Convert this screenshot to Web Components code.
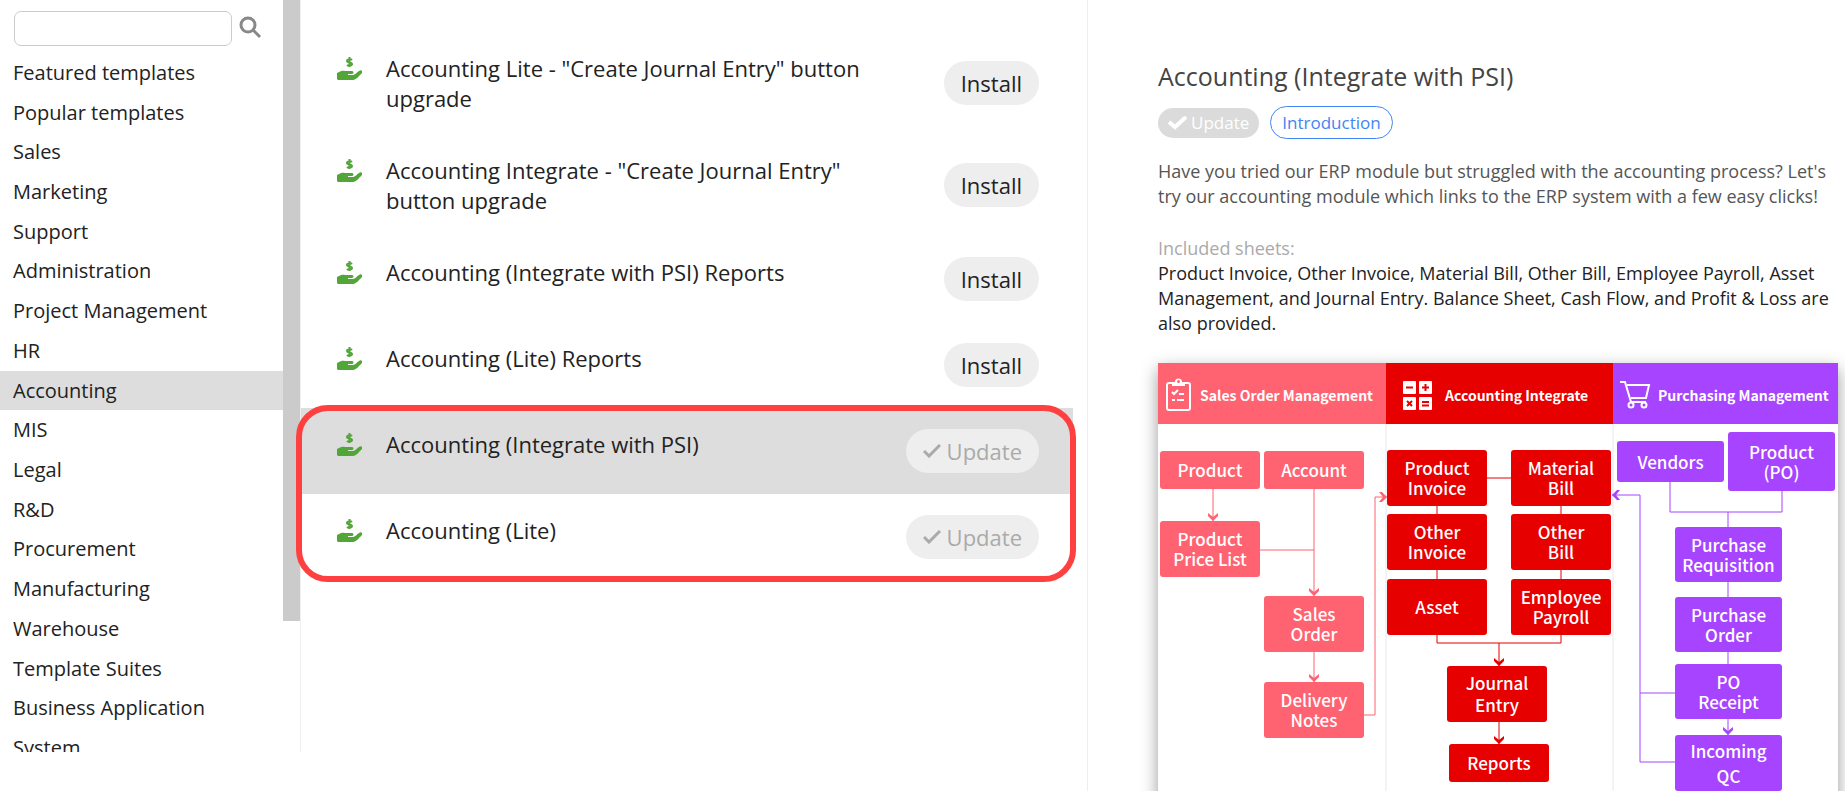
<!DOCTYPE html>
<html lang="en">
<head>
<meta charset="utf-8">
<title>Templates</title>
<style>
    body {
        margin: 0;
        background: #fff;
        color: #222;
        font-family: "Open Sans", "Noto Sans", sans-serif;
    }
</style>
</head>
<body>
<template-store></template-store>

<script>
class SearchField extends HTMLElement {

    constructor() {
        super();
        this.shadowDOM = this.attachShadow({mode: "open"});
    }

    connectedCallback() {
        this.render();
    }

    render() {
        this.shadowDOM.innerHTML = `
        <style>
        :host {
            display: flex;
            padding: 11px 20px 7px 14px;
            gap: 7px;
        }

        input {
            box-sizing: border-box;
            flex: 1;
            min-width: 0;
            height: 35px;
            padding: 0 8px;
            border: 1px solid #ccc;
            border-radius: 7px;
            font: inherit;
        }

        button {
            width: 24px;
            height: 34px;
            padding: 0;
            border: 0;
            background: none;
            cursor: pointer;
        }

        svg {
            display: block;
        }
        </style>
        <input type="search" aria-label="Search templates">
        <button type="button" aria-label="Search">
            <svg width="24" height="24" viewBox="0 0 24 24" fill="none" stroke="#888" stroke-width="3">
                <circle cx="9" cy="9" r="7"/>
                <path d="M14 14l7 7"/>
            </svg>
        </button>
        `;
    }
}

customElements.define("search-field", SearchField);

class CategoryMenu extends HTMLElement {

    constructor() {
        super();
        this.shadowDOM = this.attachShadow({mode: "open"});
        this.categories = ["Featured templates", "Popular templates", "Sales", "Marketing", "Support",
            "Administration", "Project Management", "HR", "Accounting", "MIS", "Legal", "R&amp;D", "Procurement",
            "Manufacturing", "Warehouse", "Template Suites", "Business Application", "System"];
    }

    connectedCallback() {
        this.render();
    }

    render() {
        const active = this.getAttribute("active");
        const links = this.categories.map(name =>
            `<a href="#"${name === active ? ' class="active"' : ""}>${name}</a>`).join("");

        this.shadowDOM.innerHTML = `
        <style>
        :host {
            display: grid;
            grid-template-columns: minmax(0, 1fr) 17px;
            height: calc(100vh - 50px);
            overflow: hidden;
        }

        nav {
            display: flex;
            flex-direction: column;
            height: 715px;
        }

        a {
            display: flex;
            flex: 1;
            align-items: center;
            padding: 0 0 1px 13px;
            color: #222;
            font-size: 20px;
            font-weight: 500;
            line-height: 27px;
            text-decoration: none;
        }

        .active {
            background: #ddd;
        }

        .scroll {
            display: grid;
            grid-template-rows: 621fr 131fr;
            height: calc(100vh - 50px);
        }

        .thumb {
            background: #cbcbcb;
        }
        </style>
        <div>
            <search-field></search-field>
            <nav>${links}</nav>
        </div>
        <div class="scroll"><div class="thumb"></div></div>
        `;
    }
}

customElements.define("category-menu", CategoryMenu);

class TemplateRow extends HTMLElement {

    constructor() {
        super();
        this.shadowDOM = this.attachShadow({mode: "open"});
    }

    connectedCallback() {
        this.render();
    }

    render() {
        const installed = this.hasAttribute("installed");
        const button = installed
            ? `<button type="button" disabled>
                   <svg width="18" height="14" viewBox="0 0 18 14" fill="none" stroke="#aaa" stroke-width="3"><path d="M1 7l5 5L17 1"/></svg>Update
               </button>`
            : `<button type="button">Install</button>`;

        this.shadowDOM.innerHTML = `
        <style>
        :host {
            display: grid;
            grid-template-columns: 25px 1fr 133px;
            gap: 24px;
            padding: 21px 34px 21px 36px;
            font-size: 22px;
            line-height: 30px;
        }

        :host([selected]) {
            background: #ddd;
        }

        .icon {
            display: block;
            margin-top: 4px;
        }

        button {
            display: flex;
            align-items: center;
            align-self: center;
            justify-self: end;
            gap: 6px;
            height: 44px;
            padding: 0 17px;
            border: 0;
            border-radius: 22px;
            background: #eee;
            color: #222;
            font: inherit;
            cursor: pointer;
        }

        button:disabled {
            color: #aaa;
            cursor: default;
        }
        </style>
        <svg class="icon" width="25" height="24" viewBox="0 0 25 24" fill="none" stroke="#52a637">
            <path stroke-width="2" d="M15 3C14 2 10 2 10 4s5 1 5 3-4 2-5 1M12.500 0v10"/>
            <path fill="#52a637" stroke="none" d="M0 16l2-1c3-2 6-1 8-1h5c2 0 2 3 0 3h-4v1h5c2 0 4-3 6-4 2-2 4 0 3 2-3 3-6 7-9 7H1l-1-1z"/>
        </svg>
        <div><slot></slot></div>
        ${button}
        `;
    }
}

customElements.define("template-row", TemplateRow);

class HighlightGroup extends HTMLElement {

    constructor() {
        super();
        this.shadowDOM = this.attachShadow({mode: "open"});
    }

    connectedCallback() {
        this.shadowDOM.innerHTML = `
        <style>
        :host {
            display: block;
            position: relative;
        }

        .frame {
            position: absolute;
            inset: -3px -3px -2px -5px;
            border: 6px solid #ff4040;
            border-radius: 32px;
            pointer-events: none;
        }
        </style>
        <slot></slot>
        <div class="frame"></div>
        `;
    }
}

customElements.define("highlight-group", HighlightGroup);

class FlowChart extends HTMLElement {

    constructor() {
        super();
        this.shadowDOM = this.attachShadow({mode: "open"});
        // [x, y, width, height, lines, line pitch]
        this.groups = [
            {color: "#ff6371", nodes: [
                [2, 88, 100, 38, ["Product"]],
                [106, 88, 100, 38, ["Account"]],
                [2, 158, 100, 56, ["Product", "Price List"]],
                [106, 233, 100, 56, ["Sales", "Order"]],
                [106, 319, 100, 56, ["Delivery", "Notes"]]
            ], lines: "M55 126V158M156 126V233M102 187H156M156 289V319M206 352H217V134H229",
            arrows: [[55, 158, 0], [156, 233, 0], [156, 319, 0], [229, 134, -90]]},
            {color: "#e60000", nodes: [
                [229, 87, 100, 56, ["Product", "Invoice"]],
                [353, 87, 100, 56, ["Material", "Bill"]],
                [229, 151, 100, 56, ["Other", "Invoice"]],
                [353, 151, 100, 56, ["Other", "Bill"]],
                [229, 216, 100, 56, ["Asset"]],
                [353, 216, 100, 56, ["Employee", "Payroll"]],
                [289, 303, 100, 56, ["Journal", "Entry"], 22],
                [291, 381, 100, 38, ["Reports"]]
            ], lines: "M329 115H353M279 142V151M279 207V216M403 142V151M403 207V216M279 272V280H403V272M341 280V303M341 359V381",
            arrows: [[341, 303, 0], [341, 381, 0]]},
            {color: "#a644ff", nodes: [
                [459, 78, 107, 41, ["Vendors"]],
                [570, 69, 107, 59, ["Product", "(PO)"]],
                [517, 164, 107, 55, ["Purchase", "Requisition"]],
                [517, 234, 107, 55, ["Purchase", "Order"]],
                [517, 301, 107, 55, ["PO", "Receipt"]],
                [517, 372, 107, 56, ["Incoming", "QC"], 25]
            ], lines: "M512 119V149H624V128M570 149V164M570 219V234M570 289V301M570 356V372M517 330H482M517 399H482V132H454",
            arrows: [[570, 372, 0], [454, 132, 90]]}
        ];
    }

    connectedCallback() {
        this.render();
    }

    drawNode([x, y, w, h, lines, pitch = 20], color) {
        const first = Math.round(y + h / 2 + 7 - (lines.length - 1) * pitch / 2);
        const text = lines.map((line, i) =>
            `<text x="${x + w / 2}" y="${first + i * pitch}">${line}</text>`).join("");
        return `<rect x="${x}" y="${y}" width="${w}" height="${h}" rx="3" fill="${color}"/>${text}`;
    }

    drawGroup(group) {
        const arrows = group.arrows.map(([x, y, turn]) =>
            `<path fill="${group.color}" transform="translate(${x} ${y}) rotate(${turn})" d="M0 0L-5 -5V-8L0 -4L5 -8V-5z"/>`).join("");
        return `<path d="${group.lines}" fill="none" stroke="${group.color}"/>${arrows}`
            + group.nodes.map(node => this.drawNode(node, group.color)).join("");
    }

    render() {
        this.shadowDOM.innerHTML = `
        <style>
        :host {
            display: block;
            box-shadow: 0 6px 16px rgba(0, 0, 0, .4);
        }

        svg {
            display: block;
            width: 100%;
            background: #fff;
        }

        text {
            fill: #fff;
            font-family: "Noto Sans CJK TC", "Noto Sans CJK SC", sans-serif;
            font-size: 17px;
            font-weight: 500;
            text-anchor: middle;
        }

        .head text {
            font-size: 14px;
            font-weight: 700;
            text-anchor: start;
        }
        </style>
        <svg viewBox="0 0 680 480">
            <path d="M228 61V480M455 61V480" stroke="#e8e8e8"/>
            <g class="head">
                <rect width="228" height="61" fill="#ff6371"/>
                <rect x="228" width="227" height="61" fill="#e60000"/>
                <rect x="455" width="225" height="61" fill="#a644ff"/>
                <text x="42" y="38">Sales Order Management</text>
                <text x="287" y="38">Accounting Integrate</text>
                <text x="500" y="38">Purchasing Management</text>
            </g>
            <g fill="none" stroke="#fff" stroke-width="2">
                <rect x="9" y="20" width="23" height="27" rx="2"/>
                <path fill="#fff" stroke="none" d="M14 19h3a3.500 3.500 0 0 1 7 0h3v4H14z"/>
                <circle cx="20.500" cy="18.500" r="1.500" fill="#ff6371" stroke="none"/>
                <path stroke-width="2" d="M14 29l2 2 4-4M21 31h5M14 37h3M19 37h7"/>
            </g>
            <g fill="#fff">
                <rect x="245" y="18" width="13" height="13" rx="1"/>
                <rect x="261" y="18" width="13" height="13" rx="1"/>
                <rect x="245" y="34" width="13" height="13" rx="1"/>
                <rect x="261" y="34" width="13" height="13" rx="1"/>
                <path stroke="#e60000" stroke-width="2" d="M248 24.500h7M264 24.500h7M267.500 21v7M249 38l5 5M254 38l-5 5M264 39h7M264 42.500h7"/>
            </g>
            <g fill="none" stroke="#fff" stroke-width="2">
                <path d="M462 19h5l6 20h15M469 22h22l-3 13h-15"/>
                <circle cx="473" cy="42" r="2.500"/>
                <circle cx="486" cy="42" r="2.500"/>
            </g>
            ${this.groups.map(group => this.drawGroup(group)).join("")}
        </svg>
        `;
    }
}

customElements.define("flow-chart", FlowChart);

class TemplateDetail extends HTMLElement {

    constructor() {
        super();
        this.shadowDOM = this.attachShadow({mode: "open"});
    }

    connectedCallback() {
        this.render();
    }

    render() {
        this.shadowDOM.innerHTML = `
        <style>
        :host {
            display: block;
            box-sizing: border-box;
            height: calc(100vh - 11px);
            padding: 59px 7px 0 70px;
            border-left: 1px solid #eee;
            overflow: hidden;
            font-size: 18px;
            line-height: 25px;
        }

        h1 {
            margin: 0 0 12px;
            color: #444;
            font-size: 25px;
            font-weight: 400;
            line-height: 35px;
        }

        .actions {
            display: flex;
            align-items: center;
            gap: 11px;
            margin-bottom: 20px;
        }

        button, .actions a {
            display: flex;
            align-items: center;
            box-sizing: border-box;
            font: inherit;
            font-size: 17px;
        }

        button {
            gap: 4px;
            height: 30px;
            padding: 0 10px;
            border: 0;
            border-radius: 15px;
            background: #dbdbdb;
            color: #fff;
            font-weight: 500;
        }

        .actions a {
            height: 33px;
            padding: 0 11px;
            border: 1px solid #4285f4;
            border-radius: 17px;
            color: #4285f4;
            text-decoration: none;
        }

        p {
            margin: 0 0 27px;
            color: #555;
        }

        h2 {
            margin: 0;
            color: #aaa;
            font-size: 18px;
            font-weight: 400;
        }

        .sheets {
            color: #222;
        }
        </style>
        <h1><slot name="title"></slot></h1>
        <div class="actions">
            <button type="button" disabled>
                <svg width="19" height="14" viewBox="0 0 19 14" fill="none" stroke="#fff" stroke-width="4"><path d="M1 6l6 5L18 1"/></svg>Update
            </button>
            <a href="#">Introduction</a>
        </div>
        <p><slot></slot></p>
        <h2>Included sheets:</h2>
        <p class="sheets"><slot name="sheets"></slot></p>
        <flow-chart></flow-chart>
        `;
    }
}

customElements.define("template-detail", TemplateDetail);

class TemplateStore extends HTMLElement {

    constructor() {
        super();
        this.shadowDOM = this.attachShadow({mode: "open"});
    }

    connectedCallback() {
        this.render();
    }

    render() {
        this.shadowDOM.innerHTML = `
        <style>
        :host {
            display: grid;
            grid-template-columns: 300px minmax(0, 787fr) minmax(0, 758fr);
            align-items: start;
            height: 100vh;
            overflow: hidden;
        }

        main {
            box-sizing: border-box;
            height: calc(100vh - 50px);
            padding: 32px 14px 0 0;
            border-left: 1px solid #eee;
        }
        </style>
        <category-menu active="Accounting"></category-menu>
        <main>
            <template-row>Accounting Lite - "Create Journal Entry" button upgrade</template-row>
            <template-row>Accounting Integrate - "Create Journal Entry" button upgrade</template-row>
            <template-row>Accounting (Integrate with PSI) Reports</template-row>
            <template-row>Accounting (Lite) Reports</template-row>
            <highlight-group>
                <template-row selected installed>Accounting (Integrate with PSI)</template-row>
                <template-row installed>Accounting (Lite)</template-row>
            </highlight-group>
        </main>
        <template-detail>
            <span slot="title">Accounting (Integrate with PSI)</span>
            Have you tried our ERP module but struggled with the accounting process? Let's try our accounting module which links to the ERP system with a few easy clicks!
            <span slot="sheets">Product Invoice, Other Invoice, Material Bill, Other Bill, Employee Payroll, Asset Management, and Journal Entry. Balance Sheet, Cash Flow, and Profit &amp; Loss are also provided.</span>
        </template-detail>
        `;
    }
}

customElements.define("template-store", TemplateStore);
</script>
</body>
</html>
